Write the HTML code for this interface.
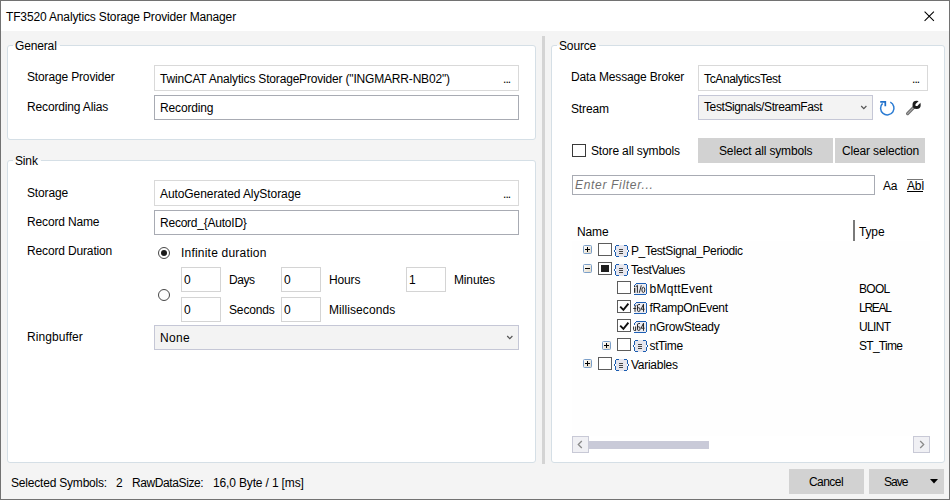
<!DOCTYPE html>
<html><head><meta charset="utf-8">
<style>
html,body{margin:0;padding:0;}
body{width:950px;height:500px;position:relative;overflow:hidden;background:#f4f4f4;font-family:"Liberation Sans",sans-serif;}
.a{position:absolute;box-sizing:border-box;}
.t{position:absolute;font-size:12px;line-height:17px;letter-spacing:-0.15px;white-space:nowrap;color:#000;}
.gb{position:absolute;box-sizing:border-box;border:1px solid #d5dfe6;border-radius:3px;background:#fff;}
.gl{position:absolute;font-size:12px;line-height:17px;letter-spacing:-0.15px;white-space:nowrap;}
.tbl{position:absolute;box-sizing:border-box;border:1px solid #d9d9d9;background:#fff;}
.tbd{position:absolute;box-sizing:border-box;border:1px solid #a8abb3;background:#fff;}
.nb{position:absolute;box-sizing:border-box;border:1px solid #d4d4d4;background:#fff;width:40px;height:25px;}
.cb{position:absolute;box-sizing:border-box;border:1px solid #c5c7d6;background:#f3f3f3;}
.btn{position:absolute;box-sizing:border-box;background:#d2d2d2;}
.dots{position:absolute;font-size:12px;line-height:17px;letter-spacing:-0.9px;}
.chk{position:absolute;box-sizing:border-box;width:13px;height:13px;border:1px solid #3a3a3a;background:#fff;}
</style></head>
<body>

<svg width="0" height="0" style="position:absolute">
<defs>
<linearGradient id="expg" x1="0" y1="0" x2="1" y2="1"><stop offset="0" stop-color="#ffffff"/><stop offset="1" stop-color="#e2d9c6"/></linearGradient>
<symbol id="plus" viewBox="0 0 9 9"><rect x="0.5" y="0.5" width="8" height="8" rx="1" fill="url(#expg)" stroke="#7b9fc9"/><path d="M2 4.5H7M4.5 2V7" stroke="#000" stroke-width="1"/></symbol>
<symbol id="minus" viewBox="0 0 9 9"><rect x="0.5" y="0.5" width="8" height="8" rx="1" fill="url(#expg)" stroke="#7b9fc9"/><path d="M2 4.5H7" stroke="#000" stroke-width="1"/></symbol>
<symbol id="struct" viewBox="0 0 15 13"><rect x="2" y="0" width="11" height="12" fill="#e6e6ee"/><g fill="#1a5cb0"><rect x="2" y="0" width="3" height="1"/><rect x="1" y="1" width="1" height="4"/><rect x="0" y="5" width="1" height="2"/><rect x="1" y="7" width="1" height="4"/><rect x="2" y="11" width="3" height="1"/><rect x="10" y="0" width="3" height="1"/><rect x="13" y="1" width="1" height="4"/><rect x="14" y="5" width="1" height="2"/><rect x="13" y="7" width="1" height="4"/><rect x="10" y="11" width="3" height="1"/></g><g fill="#454545"><rect x="5" y="4" width="4" height="1"/><rect x="5" y="6" width="4" height="1"/><rect x="5" y="8" width="4" height="1"/></g></symbol>
<symbol id="chkon" viewBox="0 0 14 13"><rect x="0.5" y="0.5" width="13" height="12" fill="#fff" stroke="#5c5c5c"/><path d="M3.2 6.6L6.4 9.9L11.4 3.6" fill="none" stroke="#111" stroke-width="1.9"/></symbol>
<symbol id="chkoff" viewBox="0 0 14 13"><rect x="0.5" y="0.5" width="13" height="12" fill="#fff" stroke="#5c5c5c"/></symbol>
<symbol id="chkind" viewBox="0 0 14 13"><rect x="0.5" y="0.5" width="13" height="12" fill="#fff" stroke="#5c5c5c"/><rect x="3" y="3" width="8" height="7" fill="#1e1e1e"/></symbol>
<symbol id="tyfr" viewBox="0 0 15 14"><rect x="2" y="2" width="11" height="10" fill="#ececf1"/><g fill="#1d5fb5"><rect x="3" y="1" width="10" height="1"/><rect x="13" y="2" width="1" height="10"/><rect x="1" y="12" width="12" height="1"/><rect x="2" y="2" width="1" height="1"/><rect x="1" y="3" width="1" height="2"/></g></symbol>
<symbol id="g64" viewBox="0 0 15 14"><path d="M7 3.5H5.6Q4.5 3.5 4.5 5V9.2Q4.5 10.5 5.7 10.5Q7 10.5 7 9.2V8Q7 6.8 5.8 6.8H4.5M10.5 10.8V3.2L8.1 8.2H11.6" fill="none" stroke="#2a2a2a" stroke-width="1"/></symbol>
<symbol id="gbool" viewBox="0 0 15 14"><rect x="1" y="4" width="1.3" height="1.2" fill="#2a2a2a"/><rect x="1" y="6" width="1.3" height="4.8" fill="#2a2a2a"/><path d="M3 4.6L4.4 3.3V10.8M8.3 3.3L6.3 10.8M10.3 5.2Q11.8 5.2 11.8 7.8Q11.8 10.5 10.3 10.5Q8.9 10.5 8.9 7.8Q8.9 5.2 10.3 5.2Z" fill="none" stroke="#2a2a2a" stroke-width="1"/></symbol>
</defs></svg>
<!-- window frame -->
<div class="a" style="left:0;top:0;width:950px;height:31px;background:#fff;"></div>
<div class="a" style="left:0;top:0;width:950px;height:500px;border:1px solid #727272;"></div>
<div class="t" style="left:6px;top:9px;">TF3520 Analytics Storage Provider Manager</div>
<svg class="a" style="left:924px;top:11px;" width="11" height="11" viewBox="0 0 11 11"><path d="M0.6 0.6L9.9 9.9M9.9 0.6L0.6 9.9" stroke="#000" stroke-width="1.05"/></svg>

<!-- splitter -->
<div class="a" style="left:542px;top:36px;width:3px;height:428px;background:#d4d4d4;"></div>

<!-- General -->
<div class="gb" style="left:7px;top:45px;width:529px;height:95px;"></div>
<div class="a" style="left:13px;top:45px;width:47px;height:1px;background:#f9f9f9;"></div>
<div class="gl" style="left:15px;top:38px;">General</div>
<div class="t" style="left:27px;top:69px;">Storage Provider</div>
<div class="tbl" style="left:154px;top:65px;width:365px;height:26px;"></div>
<div class="t" style="left:160px;top:71px;letter-spacing:-0.18px;">TwinCAT Analytics StorageProvider ("INGMARR-NB02")</div>
<div class="dots" style="left:503px;top:71px;">...</div>
<div class="t" style="left:27px;top:99px;">Recording Alias</div>
<div class="tbd" style="left:154px;top:95px;width:365px;height:25px;"></div>
<div class="t" style="left:160px;top:100px;">Recording</div>

<!-- Sink -->
<div class="gb" style="left:7px;top:160px;width:529px;height:303px;"></div>
<div class="a" style="left:13px;top:160px;width:28px;height:1px;background:#f9f9f9;"></div>
<div class="gl" style="left:15px;top:153px;">Sink</div>
<div class="t" style="left:27px;top:185px;">Storage</div>
<div class="tbl" style="left:154px;top:180px;width:365px;height:26px;"></div>
<div class="t" style="left:160px;top:186px;letter-spacing:-0.08px;">AutoGenerated AlyStorage</div>
<div class="dots" style="left:503px;top:186px;">...</div>
<div class="t" style="left:27px;top:214px;">Record Name</div>
<div class="tbd" style="left:154px;top:210px;width:365px;height:25px;"></div>
<div class="t" style="left:160px;top:215px;letter-spacing:-0.23px;">Record_{AutoID}</div>
<div class="t" style="left:27px;top:243px;">Record Duration</div>
<!-- radios -->
<div class="a" style="left:158px;top:247px;width:12px;height:12px;border:1px solid #474747;border-radius:50%;background:#fff;"></div>
<div class="a" style="left:161px;top:250px;width:6px;height:6px;border-radius:50%;background:#1a1a1a;"></div>
<div class="t" style="left:181px;top:245px;letter-spacing:0.21px;">Infinite duration</div>
<div class="a" style="left:158px;top:289px;width:12px;height:12px;border:1px solid #474747;border-radius:50%;background:#fff;"></div>
<div class="nb" style="left:181px;top:267px;"></div>
<div class="t" style="left:184px;top:272px;">0</div>
<div class="t" style="left:229px;top:272px;letter-spacing:-0.48px;">Days</div>
<div class="nb" style="left:281px;top:267px;"></div>
<div class="t" style="left:284px;top:272px;">0</div>
<div class="t" style="left:329px;top:272px;">Hours</div>
<div class="nb" style="left:406px;top:267px;"></div>
<div class="t" style="left:409px;top:272px;">1</div>
<div class="t" style="left:454px;top:272px;">Minutes</div>
<div class="nb" style="left:181px;top:297px;"></div>
<div class="t" style="left:184px;top:302px;">0</div>
<div class="t" style="left:229px;top:302px;">Seconds</div>
<div class="nb" style="left:281px;top:297px;"></div>
<div class="t" style="left:284px;top:302px;">0</div>
<div class="t" style="left:329px;top:302px;letter-spacing:0.07px;">Milliseconds</div>
<div class="t" style="left:27px;top:329px;letter-spacing:0.07px;">Ringbuffer</div>
<div class="cb" style="left:154px;top:325px;width:365px;height:25px;"></div>
<div class="t" style="left:160px;top:330px;letter-spacing:0.32px;">None</div>
<svg class="a" style="left:506px;top:335px;" width="8" height="5" viewBox="0 0 8 5"><path d="M1.2 1L3.8 3.6L6.4 1" fill="none" stroke="#555" stroke-width="1.2"/></svg>

<!-- Source -->
<div class="gb" style="left:551px;top:45px;width:394px;height:418px;"></div>
<div class="a" style="left:557px;top:45px;width:42px;height:1px;background:#f9f9f9;"></div>
<div class="gl" style="left:559px;top:38px;">Source</div>
<div class="t" style="left:571px;top:69px;">Data Message Broker</div>
<div class="tbl" style="left:698px;top:65px;width:230px;height:26px;"></div>
<div class="t" style="left:704px;top:71px;letter-spacing:-0.36px;">TcAnalyticsTest</div>
<div class="dots" style="left:912px;top:71px;">...</div>
<div class="t" style="left:571px;top:101px;">Stream</div>
<div class="cb" style="left:698px;top:95px;width:175px;height:25px;"></div>
<div class="t" style="left:704px;top:99px;letter-spacing:-0.39px;">TestSignals/StreamFast</div>
<svg class="a" style="left:860px;top:105px;" width="8" height="5" viewBox="0 0 8 5"><path d="M1.2 1L3.8 3.6L6.4 1" fill="none" stroke="#555" stroke-width="1.2"/></svg>
<!-- refresh icon -->
<svg class="a" style="left:878px;top:99px;" width="18" height="18" viewBox="0 0 18 18"><path d="M12.3 3.2 A6.7 6.7 0 1 1 4.6 4.4" fill="none" stroke="#2a7bd3" stroke-width="1.5"/><path d="M2.2 2.9 H7.3 V7.2" fill="none" stroke="#1f6fc9" stroke-width="1.7"/></svg>
<!-- wrench icon -->
<svg class="a" style="left:905px;top:100px;" width="17" height="16" viewBox="0 0 17 16"><path d="M2.6 13.6 L10 6.2" stroke="#6a6a6a" stroke-width="3.2" stroke-linecap="round"/><path d="M2.6 13.6 L10 6.2" stroke="#a8a8a8" stroke-width="1.2" stroke-linecap="round"/><circle cx="11.6" cy="4.9" r="4.1" fill="#1c1c1c"/><path d="M11.6 4.9 L15.6 0.9" stroke="#fff" stroke-width="2.6" stroke-linecap="butt"/><circle cx="11.6" cy="4.9" r="1.2" fill="#fff"/></svg>

<div class="chk" style="left:572px;top:144px;width:14px;height:13px;"></div>
<div class="t" style="left:591px;top:143px;">Store all symbols</div>
<div class="btn" style="left:698px;top:138px;width:135px;height:25px;"></div>
<div class="t" style="left:719px;top:143px;">Select all symbols</div>
<div class="btn" style="left:835px;top:138px;width:90px;height:25px;"></div>
<div class="t" style="left:842px;top:143px;">Clear selection</div>

<div class="tbd" style="left:572px;top:175px;width:303px;height:20px;"></div>
<div class="t" style="left:575px;top:177px;font-style:italic;color:#6f6f6f;letter-spacing:0.68px;">Enter Filter...</div>
<div class="t" style="left:883px;top:178px;">Aa</div>
<div class="a" style="left:907px;top:179px;width:16px;height:1px;background:#777;"></div>
<div class="t" style="left:907px;top:178px;">Abl</div>
<div class="a" style="left:907px;top:191px;width:16px;height:1px;background:#000;"></div>

<!-- tree -->
<div class="a" style="left:572px;top:220px;width:358px;height:216px;background:#fefefe;"></div>
<div class="a" style="left:572px;top:220px;width:358px;height:21px;background:#fff;"></div>
<div class="t" style="left:577px;top:224px;">Name</div>
<div class="a" style="left:853px;top:220px;width:2px;height:21px;background:#7a7a7a;"></div>
<div class="t" style="left:859px;top:224px;">Type</div>


<!-- tree rows -->
<svg class="a" style="left:583px;top:245px;" width="9" height="9"><use href="#plus"/></svg>
<svg class="a" style="left:598px;top:243px;" width="14" height="13"><use href="#chkoff"/></svg>
<svg class="a" style="left:614px;top:245px;" width="15" height="13"><use href="#struct"/></svg>
<div class="t" style="left:631px;top:243px;letter-spacing:-0.4px;">P_TestSignal_Periodic</div>

<svg class="a" style="left:583px;top:264px;" width="9" height="9"><use href="#minus"/></svg>
<svg class="a" style="left:598px;top:262px;" width="14" height="13"><use href="#chkind"/></svg>
<svg class="a" style="left:614px;top:264px;" width="15" height="13"><use href="#struct"/></svg>
<div class="t" style="left:631px;top:262px;letter-spacing:-0.39px;">TestValues</div>

<svg class="a" style="left:617px;top:281px;" width="14" height="13"><use href="#chkoff"/></svg>
<svg class="a" style="left:633px;top:282px;" width="15" height="14"><use href="#tyfr"/><use href="#gbool"/></svg>
<div class="t" style="left:649.6px;top:281px;letter-spacing:0.23px;">bMqttEvent</div>
<div class="t" style="left:859px;top:281px;letter-spacing:-0.72px;">BOOL</div>

<svg class="a" style="left:617px;top:300px;" width="14" height="13"><use href="#chkon"/></svg>
<svg class="a" style="left:633px;top:301px;" width="15" height="14"><use href="#tyfr"/><use href="#g64"/><path d="M3.3 4.5Q2 4.5 2 6V10.8M0.3 7.5H3.2" fill="none" stroke="#2a2a2a" stroke-width="1"/></svg>
<div class="t" style="left:649.6px;top:300px;letter-spacing:-0.33px;">fRampOnEvent</div>
<div class="t" style="left:859px;top:300px;letter-spacing:-1.25px;">LREAL</div>

<svg class="a" style="left:617px;top:319px;" width="14" height="13"><use href="#chkon"/></svg>
<svg class="a" style="left:633px;top:320px;" width="15" height="14"><use href="#tyfr"/><use href="#g64"/><path d="M0.6 6.5V9.5Q0.6 10.5 1.6 10.5Q2.6 10.5 2.6 9.5M2.6 6.5V10.8" fill="none" stroke="#2a2a2a" stroke-width="1"/></svg>
<div class="t" style="left:649.6px;top:319px;letter-spacing:-0.25px;">nGrowSteady</div>
<div class="t" style="left:859px;top:319px;letter-spacing:-0.65px;">ULINT</div>

<svg class="a" style="left:602px;top:341px;" width="9" height="9"><use href="#plus"/></svg>
<svg class="a" style="left:617px;top:338px;" width="14" height="13"><use href="#chkoff"/></svg>
<svg class="a" style="left:633px;top:340px;" width="15" height="13"><use href="#struct"/></svg>
<div class="t" style="left:649.6px;top:338px;letter-spacing:-0.41px;">stTime</div>
<div class="t" style="left:859px;top:338px;letter-spacing:-0.72px;">ST_Time</div>

<svg class="a" style="left:583px;top:359px;" width="9" height="9"><use href="#plus"/></svg>
<svg class="a" style="left:598px;top:357px;" width="14" height="13"><use href="#chkoff"/></svg>
<svg class="a" style="left:614px;top:359px;" width="15" height="13"><use href="#struct"/></svg>
<div class="t" style="left:631px;top:357px;letter-spacing:-0.27px;">Variables</div>

<!-- scrollbar -->
<div class="a" style="left:572px;top:436px;width:17px;height:17px;border:1px solid #c8c9d6;background:#f0f0f4;"></div>
<svg class="a" style="left:577px;top:440px;" width="6" height="9" viewBox="0 0 6 9"><path d="M4.8 1L1.3 4.5L4.8 8" fill="none" stroke="#8a8a8a" stroke-width="1.3"/></svg>
<div class="a" style="left:589px;top:441px;width:120px;height:8px;background:#c9cad8;"></div>
<div class="a" style="left:913px;top:436px;width:17px;height:17px;border:1px solid #c8c9d6;background:#f0f0f4;"></div>
<svg class="a" style="left:919px;top:440px;" width="6" height="9" viewBox="0 0 6 9"><path d="M1.2 1L4.7 4.5L1.2 8" fill="none" stroke="#8a8a8a" stroke-width="1.3"/></svg>

<!-- status bar -->
<div class="t" style="left:11px;top:475px;letter-spacing:-0.2px;">Selected Symbols:</div>
<div class="t" style="left:116px;top:475px;">2</div>
<div class="t" style="left:132px;top:475px;letter-spacing:-0.4px;">RawDataSize:</div>
<div class="t" style="left:213px;top:475px;">16,0 Byte / 1 [ms]</div>
<div class="btn" style="left:789px;top:469px;width:75px;height:25px;"></div>
<div class="t" style="left:809px;top:474px;letter-spacing:-0.55px;">Cancel</div>
<div class="btn" style="left:869px;top:469px;width:75px;height:25px;"></div>
<div class="t" style="left:884px;top:474px;letter-spacing:-0.95px;">Save</div>
<svg class="a" style="left:930px;top:479px;" width="8" height="5" viewBox="0 0 8 5"><path d="M0 0H8L4 4.5Z" fill="#000"/></svg>
</body></html>
